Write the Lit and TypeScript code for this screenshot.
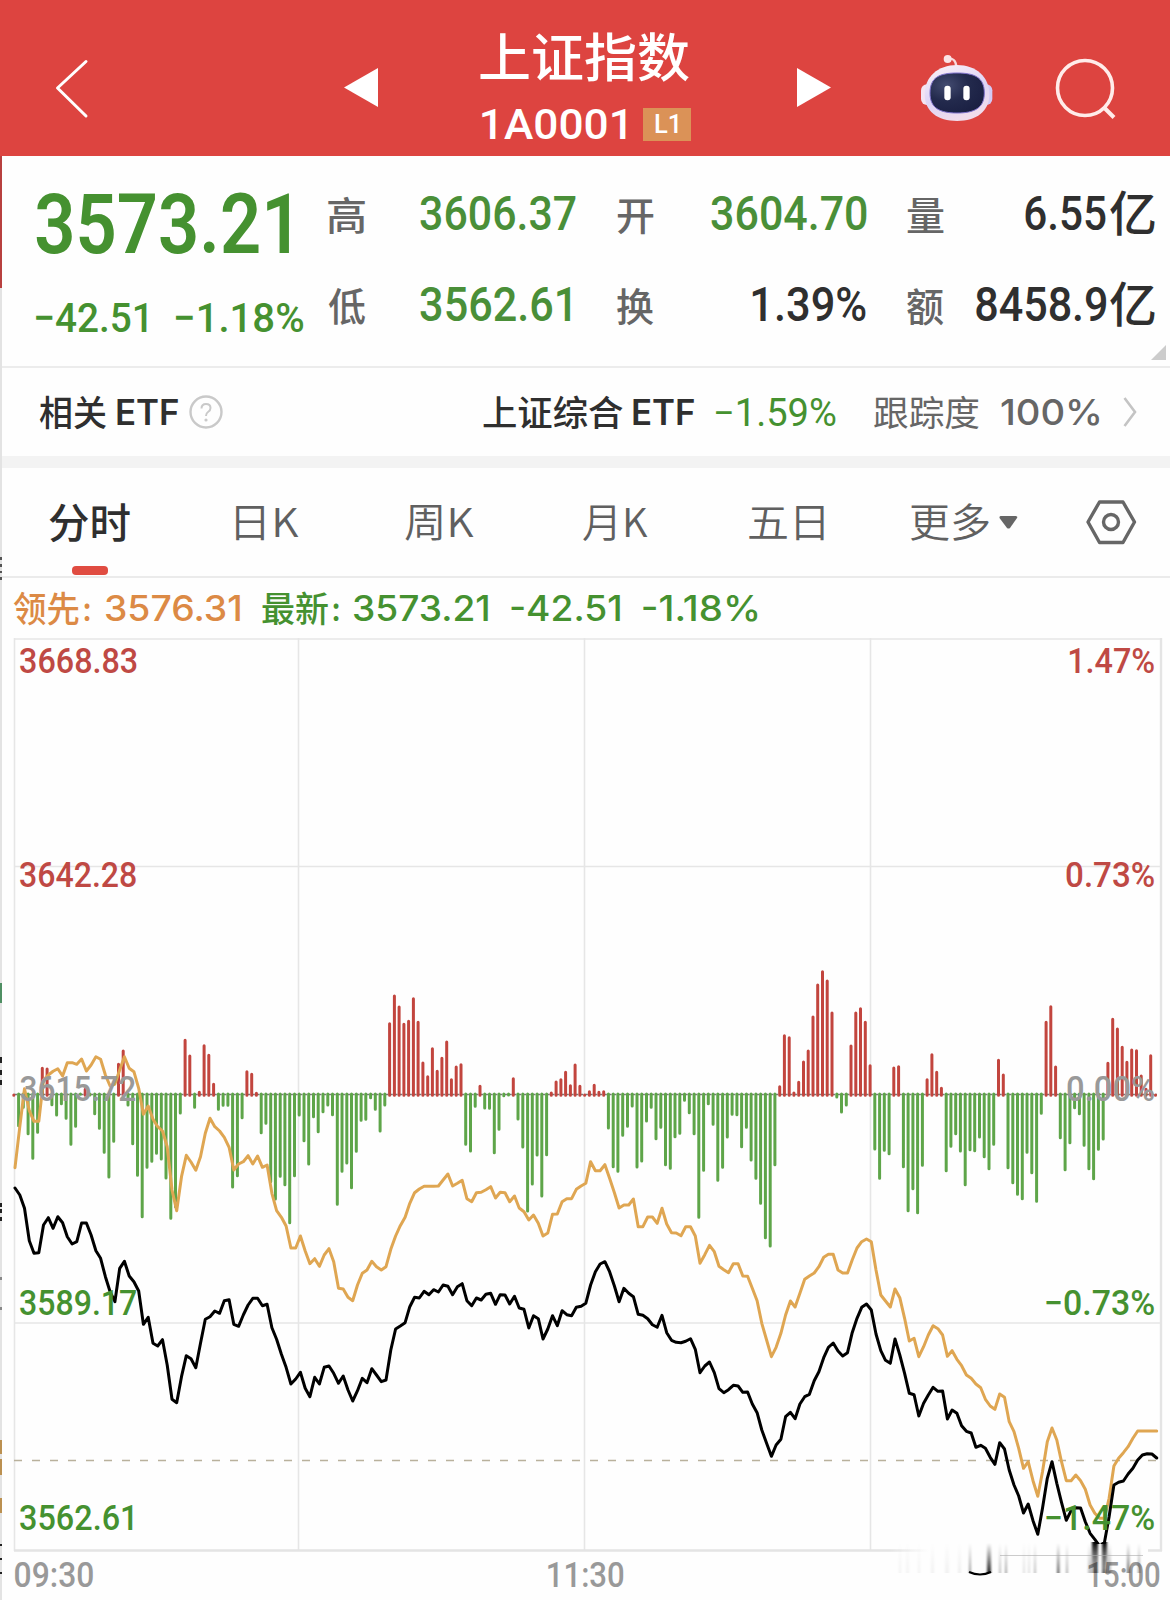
import { LitElement, html, svg, css } from "lit";
import { customElement, property } from "lit/decorators.js";

const NUM = 'Roboto, "Liberation Sans", sans-serif';
const UI = 'Inter, Roboto, sans-serif';
const CJK = '"Noto Sans CJK SC", sans-serif';

const pen = document.createElement("canvas").getContext("2d")!;

/** Start offset and text length that make the inked part of a label exactly `width` wide. */
function measure(text: string, family: string, weight: number, size: number, width: number) {
  pen.font = `${weight} ${size}px ${family}`;
  const m = pen.measureText(text);
  const scale = width / (m.actualBoundingBoxLeft + m.actualBoundingBoxRight);
  return { dx: m.actualBoundingBoxLeft * scale, length: m.width * scale };
}

type Face = "num" | "ui" | "cjk";
const FAMILY: Record<Face, string> = { num: NUM, ui: UI, cjk: CJK };
const BASE: Record<Face, number> = { num: 0.8555, ui: 0.8635, cjk: 0.88 };

@customElement("fit-text")
class FitText extends LitElement {
  static styles = css`
    :host { display: block; flex: none; }
    svg { display: block; overflow: visible; fill: currentColor; }
    .num { font-family: Roboto, "Liberation Sans", sans-serif; }
    .ui { font-family: Inter, Roboto, sans-serif; }
    .cjk { font-family: "Noto Sans CJK SC", sans-serif; }
  `;
  @property() text = "";
  @property() face: Face = "num";
  @property({ type: Number }) size = 16;
  @property({ type: Number }) w = 10;
  @property({ type: Number }) weight = 500;

  render() {
    const { dx, length } = measure(this.text, FAMILY[this.face], this.weight, this.size, this.w);
    return html`<svg width=${this.w} height=${this.size}>
      <text class=${this.face} x=${dx} y=${this.size * BASE[this.face]} font-size=${this.size}
        font-weight=${this.weight} textLength=${length} lengthAdjust="spacingAndGlyphs">${this.text}</text>
    </svg>`;
  }
}

const fit = (text: string, w: number, size: number, face: Face = "num", weight = 500, cls = "") =>
  html`<fit-text class=${cls} .text=${text} .w=${w} .size=${size} .face=${face} .weight=${weight}></fit-text>`;

/* Chart data: vertical positions in thirds of a pixel below y = 960, one entry per minute. */
const PRICE = [
  684,705,745,842,880,878,795,773,805,770,788,830,852,845,789,789,825,872,895,950,
  995,1025,925,904,948,965,993,1093,1072,1150,1158,1139,1215,1318,1328,1250,1187,1196,1223,1150,
  1078,1070,1053,1060,1022,1019,1093,1099,1065,1035,1015,1015,1037,1033,1103,1138,1183,1222,1272,1257,
  1237,1285,1310,1252,1272,1222,1218,1240,1270,1248,1290,1323,1292,1255,1268,1226,1245,1265,1260,1170,
  1107,1098,1088,1040,1012,1014,994,1004,989,996,975,979,1004,980,971,1022,1037,1014,1020,1003,
  1000,1033,1004,1005,1032,1009,1044,1048,1104,1067,1076,1137,1107,1067,1097,1052,1064,1067,1042,1039,
  1030,975,935,912,905,935,978,1025,985,1000,1010,1063,1066,1076,1094,1102,1066,1118,1141,1147,
  1148,1144,1136,1168,1238,1218,1206,1238,1286,1298,1289,1276,1278,1297,1296,1332,1358,1410,1450,1489,
  1455,1438,1370,1357,1376,1332,1310,1303,1262,1235,1193,1162,1149,1173,1188,1178,1118,1075,1042,1032,
  1050,1122,1172,1201,1210,1137,1185,1240,1300,1304,1368,1330,1305,1282,1294,1293,1377,1350,1360,1397,
  1414,1419,1462,1456,1465,1492,1513,1448,1467,1530,1575,1608,1659,1632,1682,1723,1645,1555,1505,1570,
  1627,1681,1652,1643,1644,1685,1720,1738,1758,1748,1670,1575,1567,1563,1542,1525,1500,1485,1481,1482,
  1494,
];
const LEAD = [
  623,500,386,452,484,484,360,345,334,326,348,308,308,313,297,333,315,290,298,345,
  378,372,330,290,325,335,385,463,438,478,500,513,560,690,752,650,586,606,631,590,
  520,475,500,513,532,562,630,612,605,587,612,588,622,615,700,752,772,798,864,864,
  828,873,911,896,919,885,866,905,985,987,1012,1022,975,940,930,904,920,930,920,868,
  828,797,772,730,698,687,679,679,679,678,660,642,678,670,661,716,725,698,697,689,
  680,714,697,698,725,708,744,755,780,765,790,828,819,763,762,725,716,716,688,678,
  670,605,632,632,614,655,698,744,735,735,717,800,800,771,771,790,745,792,818,819,
  827,800,800,828,910,884,856,875,919,929,938,911,911,948,949,985,1022,1090,1140,1190,
  1162,1120,1065,1023,1041,1000,958,948,939,920,892,883,883,930,939,939,900,864,845,837,
  845,930,1005,1023,1041,987,1013,1075,1143,1135,1190,1160,1125,1097,1106,1125,1189,1172,1198,1217,
  1245,1255,1272,1283,1318,1338,1348,1302,1312,1385,1415,1465,1525,1505,1562,1609,1535,1445,1404,1440,
  1505,1562,1562,1545,1562,1588,1635,1660,1675,1675,1615,1518,1495,1478,1460,1435,1413,1413,1413,1413,
  1413,
];
const BARS = [
  402,500,445,524,598,520,322,324,437,468,434,478,556,502,406,385,408,464,508,580,
  654,547,310,270,438,554,649,773,625,607,583,600,657,778,743,462,238,285,445,394,
  254,283,370,451,439,439,684,650,476,332,340,397,521,493,668,720,652,677,791,650,
  468,545,615,473,518,458,438,467,736,637,612,686,577,484,481,416,451,516,438,188,
  105,138,190,181,113,184,306,347,263,331,292,243,356,318,311,556,576,442,376,447,
  448,581,511,410,408,353,480,564,756,675,588,711,587,396,363,356,334,374,312,376,
  402,392,373,394,392,507,623,637,529,502,441,624,606,486,445,539,505,617,628,533,
  523,424,461,524,775,634,434,496,664,625,534,466,467,563,505,603,658,733,836,861,
  617,377,224,230,396,364,303,270,168,72,32,60,156,414,459,438,255,156,143,184,
  314,570,658,574,584,321,317,623,755,689,761,619,356,281,334,382,635,562,524,576,
  677,572,575,534,593,629,556,298,342,626,671,706,719,580,641,727,463,184,137,318,
  536,632,551,446,464,559,629,659,571,540,307,175,204,259,304,267,269,345,385,284,
  402,
];
const px = (v: number) => 960 + v / 3;
const ZERO = 404;

const line = (data: number[]) =>
  data.map((v, i) => `${(15 + i * 4.757).toFixed(1)},${px(v).toFixed(1)}`).join(" ");
const sticks = (up: boolean) =>
  BARS.map((v, i) => {
    if (v < ZERO !== up) return "";
    const x = (13.8 + i * 4.757).toFixed(1);
    const end = up ? v + 3 : v - 3;
    return `M${x} ${px(up ? ZERO + 2 : ZERO - 2).toFixed(1)}V${px(end).toFixed(1)}`;
  }).join("");

/* text, left edge, right edge, baseline, colour class */
const AXIS: [string, number, number, number, string][] = [
  ["3668.83", 20, 136.5, 673, "up"],
  ["3642.28", 20, 136.5, 887, "up"],
  ["3615.72", 20.5, 135.5, 1100.5, "flat"],
  ["3589.17", 20, 136.5, 1315, "down"],
  ["3562.61", 20, 133, 1529.5, "down"],
  ["1.47%", 1069, 1154.5, 673, "up"],
  ["0.73%", 1066, 1154.5, 887, "up"],
  ["0.00%", 1067, 1154.5, 1100.5, "flat"],
  ["−0.73%", 1046, 1154.5, 1315, "down"],
  ["−1.47%", 1046, 1154.5, 1529.5, "down"],
  ["09:30", 14.5, 93.5, 1587, "flat"],
  ["11:30", 547.5, 624, 1587, "flat"],
  ["15:00", 1088, 1160, 1587, "flat"],
];

@customElement("app-root")
class AppRoot extends LitElement {
  static styles = css`
    :host { display: block; position: relative; width: 1170px; height: 1600px; overflow: hidden; background: #fefefe; }
    svg { display: block; flex: none; }
    header { display: flex; height: 156px; background: #dd4440; color: #fff; }
    .back { margin: 58px 0 0 54px; }
    .prev { margin: 68px 0 0 254px; }
    .title { margin: 31px 0 0 102px; width: 213px; display: flex; flex-direction: column; gap: 20px; }
    .code { display: flex; align-items: center; gap: 17px; padding-left: 2px; }
    .level { display: flex; align-items: center; justify-content: center; width: 48px; height: 33px; background: #db9257; }
    .next { margin: 68px 0 0 104px; }
    .bot { margin: 53px 0 0 88px; }
    .find { margin: 57px 0 0 62px; }

    .quote { display: flex; height: 210px; border-bottom: 2px solid #ececec; box-sizing: content-box; }
    .main { display: flex; flex-direction: column; gap: 32px; width: 292px; padding: 26px 0 0 36px; color: #459130; }
    .change { display: flex; gap: 29px; }
    .stats { display: grid; grid-template-columns: 37px 211px 41px 38px 211px 41px 37px 211px; grid-template-rows: 91px 91px; align-items: center; padding-top: 11px; align-content: start; }
    .label { color: #666; padding-top: 5px; }
    .value { display: flex; justify-content: flex-end; align-items: center; gap: 4px; color: #2f2f2f; padding-top: 1px; }
    .value.down { color: #4a8f38; }
    .inset { padding-right: 6px; }
    .col3 { grid-column: 4; } .col4 { grid-column: 5; } .col5 { grid-column: 7; }
    .corner { position: absolute; left: 1151px; top: 345px; }

    .etf { display: flex; align-items: center; height: 88px; padding: 0 35px 0 39px; color: #2f2f2f; border-bottom: 12px solid #f3f3f3; }
    .g6 { margin-left: 5px; } .g9 { margin-left: 9px; } .g10 { margin-left: 11px; } .g22 { margin-left: 22px; }
    .mid { margin-left: 260px; } .follow { margin-left: 38px; color: #666; } .grey { color: #666; }
    .green { color: #459130; } .arrow { margin-left: 24px; }

    .tabs { display: flex; height: 110px; border-bottom: 2px solid #ebebeb; box-sizing: border-box; color: #606060; }
    .tab { display: flex; flex-direction: column; align-items: center; flex: none; padding-top: 34px; }
    .tab.on { color: #2f2f2f; }
    .row { display: flex; align-items: center; gap: 10px; }
    .mark { width: 36px; height: 9px; border-radius: 4px; background: #e04c41; margin-top: 23px; }
    .t1 { margin-left: 49px; } .t2 { margin-left: 106px; } .t3 { margin-left: 106px; } .t4 { margin-left: 108.5px; }
    .t5 { margin-left: 101px; } .t6 { margin-left: 86px; } .gear { margin: 30px 0 0 67px; }

    .info { display: flex; align-items: center; height: 60px; padding-left: 13px; color: #459130; }
    .lead { color: #dc8a45; }
    .i1 { margin-left: 15px; } .i2 { margin-left: 23px; }

    .label-text { font: 500 35px Roboto, "Liberation Sans", sans-serif; }
    .up { fill: #bf4944; } .down { fill: #459130; } .flat { fill: #999; }
    .grid { stroke: #e6e6e6; stroke-width: 1.6; fill: none; }
    .frame { stroke: #e4e4e4; stroke-width: 2.4; fill: none; }
    .stick-up { stroke: #c2453e; stroke-width: 3; stroke-linecap: round; }
    .stick-down { stroke: #5ea549; stroke-width: 3; stroke-linecap: round; }
    .price { fill: none; stroke: #000; stroke-width: 3; stroke-linejoin: round; stroke-linecap: round; }
    .avg { fill: none; stroke: #dfa652; stroke-width: 3; stroke-linejoin: round; stroke-linecap: round; }
    .edge { position: absolute; left: 0; top: 156px; }
  `;

  private header() {
    return html`<header>
      <svg class="back" width="36" height="62" fill="none" stroke="#fff" stroke-width="3" stroke-linecap="round" stroke-linejoin="round"><path d="M32 3.500L3.500 30L32 58" /></svg>
      <svg class="prev" width="34" height="39" fill="#fff"><path d="M0 19.500L34 0V39Z" /></svg>
      <div class="title">
        ${fit("上证指数", 209, 52, "cjk", 500)}
        <div class="code">
          ${fit("1A0001", 143.500, 42, "num", 500)}
          <div class="level">${fit("L1", 23, 25, "num", 500)}</div>
        </div>
      </div>
      <svg class="next" width="34" height="39" fill="#fff"><path d="M34 19.500L0 0V39Z" /></svg>
      <svg class="bot" width="74" height="70" viewBox="0 0 222 210">
        <defs>
          <linearGradient id="shell" x1="0" y1="0" x2=".4" y2="1"><stop offset="0" stop-color="#fdf3f7" /><stop offset=".6" stop-color="#ddd4f6" /><stop offset="1" stop-color="#f0dcec" /></linearGradient>
          <radialGradient id="visor" cx=".3" cy=".3" r=".8"><stop offset="0" stop-color="#434b70" /><stop offset=".5" stop-color="#232a4d" /><stop offset="1" stop-color="#1a1f42" /></radialGradient>
        </defs>
        <path d="M85 18Q110 12 112 42" fill="none" stroke="#f9d9dc" stroke-width="7" />
        <circle cx="86" cy="18" r="12" fill="#fbe3e6" />
        <rect x="6" y="94" width="40" height="62" rx="18" fill="#f4e4f2" />
        <rect x="180" y="94" width="40" height="62" rx="18" fill="#d3c9f4" />
        <path d="M114 36C172 36 211 72 211 124C211 176 172 204 114 204C56 204 17 176 17 124C17 72 56 36 114 36Z" fill="url(#shell)" />
        <path d="M114 60C165 60 196 72 196 120C196 166 165 180 114 180C63 180 33 166 33 120C33 72 63 60 114 60Z" fill="url(#visor)" stroke="#7f72cc" stroke-width="3" />
        <rect x="76" y="98" width="19" height="44" rx="9" fill="#fff" /><rect x="133" y="98" width="19" height="44" rx="9" fill="#fff" />
      </svg>
      <svg class="find" width="62" height="64" fill="none" stroke="#ffecea" stroke-width="3.600"><circle cx="30" cy="31" r="27.500" /><path d="M48.500 50L59 60.500" stroke-width="4" /></svg>
    </header>`;
  }

  private quote() {
    const label = (t: string, cls = "") => html`<div class="label ${cls}">${fit(t, 37, 39, "cjk", 500)}</div>`;
    return html`<section class="quote">
      <div class="main">
        ${fit("3573.21", 253, 83, "num", 600)}
        <div class="change">${fit("−42.51", 111, 41, "num", 500)}${fit("−1.18%", 127.500, 41, "num", 500)}</div>
      </div>
      <div class="stats">
        ${label("高")}<div class="value down">${fit("3606.37", 156, 48)}</div>
        ${label("开", "col3")}<div class="value down col4">${fit("3604.70", 155.500, 48)}</div>
        ${label("量", "col5")}<div class="value">${fit("6.55", 81, 48)}${fit("亿", 45, 48, "cjk", 500)}</div>
        ${label("低")}<div class="value down inset">${fit("3562.61", 150, 48)}</div>
        ${label("换", "col3")}<div class="value col4">${fit("1.39%", 114, 48)}</div>
        ${label("额", "col5")}<div class="value">${fit("8458.9", 130.500, 48)}${fit("亿", 45, 48, "cjk", 500)}</div>
      </div>
      <svg class="corner" width="15" height="15" fill="#ccc"><path d="M15 0V15H0Z" /></svg>
    </section>`;
  }

  private etf() {
    return html`<section class="etf">
      ${fit("相关", 67, 35, "cjk", 500)}${fit("ETF", 61, 35, "ui", 600, "g10")}
      <svg class="g10" width="34" height="36" fill="none" stroke="#c9c9c9" stroke-width="2.400"><circle cx="17" cy="18" r="15.500" /><path d="M12.500 14.500Q12.500 10 17 10Q21.500 10 21.500 14Q21.500 16.500 19 18Q17 19.300 17 22" stroke-width="2" /><circle cx="17" cy="26" r=".8" stroke-width="1.600" /></svg>
      ${fit("上证综合", 140.500, 35, "cjk", 500, "mid")}${fit("ETF", 61, 35, "ui", 600, "g9")}
      ${fit("−1.59%", 120, 38, "num", 400, "g22 green")}
      ${fit("跟踪度", 105, 35, "cjk", 400, "follow")}${fit("100%", 98, 36, "ui", 500, "g22 grey")}
      <svg class="arrow" width="14" height="30" fill="none" stroke="#c4c4c4" stroke-width="2.600"><path d="M1.500 1L12 15L1.500 29" /></svg>
    </section>`;
  }

  private tabs() {
    const k = (t: string, w: number) => html`${fit(t, w, 40, "cjk", 350)}`;
    return html`<nav class="tabs">
      <div class="tab on t1">${fit("分时", 81, 41, "cjk", 500)}<div class="mark"></div></div>
      <div class="tab t2">${k("日K", 63)}</div>
      <div class="tab t3">${k("周K", 69)}</div>
      <div class="tab t4">${k("月K", 65)}</div>
      <div class="tab t5">${k("五日", 75.500)}</div>
      <div class="tab t6"><div class="row">${k("更多", 79)}
        <svg width="19" height="13" fill="#666"><path d="M1.500 0H17Q19 .5 18 2L11 12Q9.500 13 8 12L.5 2Q0 .5 1.500 0Z" /></svg></div></div>
      <svg class="gear" width="52" height="48" fill="none" stroke="#666" stroke-width="3.400" stroke-linejoin="round"><path d="M14.500 4H38L49.500 24L38 44.500H14.500L3 24Z" /><circle cx="26" cy="24" r="7.500" /></svg>
    </nav>`;
  }

  private info() {
    return html`<section class="info">
      ${fit("领先", 66, 35, "cjk", 500, "lead")}${fit(":", 5.500, 33, "ui", 600, "lead g6")}${fit("3576.31", 135, 35, "ui", 500, "lead i1")}
      ${fit("最新", 66, 35, "cjk", 500, "g22")}${fit(":", 5.500, 33, "ui", 600, "g6")}${fit("3573.21", 135, 35, "ui", 500, "i1")}
      ${fit("-42.51", 109, 35, "ui", 500, "i2")}${fit("-1.18%", 115, 35, "ui", 500, "i2")}
    </section>`;
  }

  private chart() {
    const streaks: [number, number, number][] = [
      [899, 2, 0.05], [906, 3, 0.04], [918, 2, 0.05], [931, 3, 0.05], [945, 4, 0.05], [958, 3, 0.06],
      [969, 2, 0.4], [987, 4, 0.85], [999, 2, 0.25], [1005, 2, 0.35], [1023, 2, 0.12], [1028, 2, 0.12], [1034, 2, 0.25],
      [1057, 2.5, 0.6], [1066, 2, 0.3], [1088, 5, 0.25], [1093, 5, 0.5], [1102, 4, 0.6], [1107, 4, 0.3], [1127, 2.5, 0.6], [1138, 2, 0.4],
    ];
    return html`<svg width="1170" height="962" viewBox="0 638 1170 962">
      <defs>
        <linearGradient id="fade" x1="0" y1="0" x2="0" y2="1"><stop offset="0" stop-color="#000" stop-opacity="0" /><stop offset=".5" stop-color="#000" stop-opacity=".5" /><stop offset="1" stop-color="#000" /></linearGradient>
        <linearGradient id="spike" x1="0" y1="0" x2="0" y2="1"><stop offset="0" stop-color="#000" /><stop offset="1" stop-color="#000" stop-opacity="0" /></linearGradient>
        <linearGradient id="veil" x1="0" y1="0" x2="1" y2="0"><stop offset="0" stop-color="#fefefe" stop-opacity="0" /><stop offset=".15" stop-color="#fefefe" /><stop offset="1" stop-color="#fefefe" /></linearGradient>
        <filter id="soft" x="-5%" y="-5%" width="110%" height="110%"><feGaussianBlur stdDeviation="0.9 0.3" /></filter>
      </defs>
      <path class="grid" d="M14 639H1161M14 866.500H1161M14 1323H1161M14.500 638V1551M298.500 638V1551M584.500 638V1551M870.500 638V1551" />
      <path class="frame" d="M1161 638V1551M14 1550.500H1162" />
      <path d="M14 1460.500H1160" stroke="#b9b19c" stroke-width="1.600" stroke-dasharray="8 10" />
      <path d="M14 1094.500H1157" stroke="#777" stroke-width="1.400" stroke-dasharray="3 1.757" />
      <path class="stick-down" d=${sticks(false)} />
      <path class="stick-up" d=${sticks(true)} />
      <polyline class="avg" points=${line(LEAD)} />
      <polyline class="price" points=${line(PRICE)} />
      <rect x="890" y="1544" width="258" height="18" fill="url(#veil)" />
      ${AXIS.map(([t, x1, x2, y, cls]) => {
        const m = measure(t, NUM, 500, 35, x2 - x1);
        return svg`<text class="label-text ${cls}" x=${x1 + m.dx} y=${y} textLength=${m.length} lengthAdjust="spacingAndGlyphs">${t}</text>`;
      })}
      <g filter="url(#soft)">
        ${streaks.map(([x, w, o]) => svg`<rect x=${x} y="1543" width=${w} height="30" fill="url(#fade)" opacity=${o} />`)}
        <path d="M1092 1542H1098V1568H1092ZM1102 1542H1107V1568H1102Z" fill="url(#spike)" />
      </g>
      <path d="M969 1572Q980 1577 991 1572" stroke="#000" stroke-width="2" fill="none" />
      <path d="M1000 1555.500H1143" stroke="#aaa" stroke-width="1" opacity=".6" />
    </svg>`;
  }

  render() {
    return html`
      ${this.header()}${this.quote()}${this.etf()}${this.tabs()}${this.info()}${this.chart()}
      <svg class="edge" width="2" height="1444" viewBox="0 156 2 1444">
        <path d="M0 156H2V1600H0Z" fill="#e3e3e3" /><path d="M0 156H2V288H0Z" fill="#b8403f" />
        <path d="M0 557h2v3h-2zM0 564h2v3h-2zM0 571h2v2h-2zM0 577h2v3h-2z" fill="#555" />
        <path d="M0 983H2V1003H0Z" fill="#4f8f63" />
        <path d="M0 1057h2v6h-2zM0 1070h2v5h-2zM0 1080h2v5h-2zM0 1203h2v4h-2zM0 1209h2v4h-2zM0 1217h2v4h-2zM0 1544h2v2h-2zM0 1558h2v2h-2zM0 1572h2v2h-2z" fill="#222" />
        <path d="M0 1277h2v3h-2zM0 1307h2v3h-2z" fill="#888" />
        <path d="M0 1440h2v14h-2zM0 1459h2v16h-2zM0 1498h2v15h-2z" fill="#bb9050" />
      </svg>`;
  }
}
